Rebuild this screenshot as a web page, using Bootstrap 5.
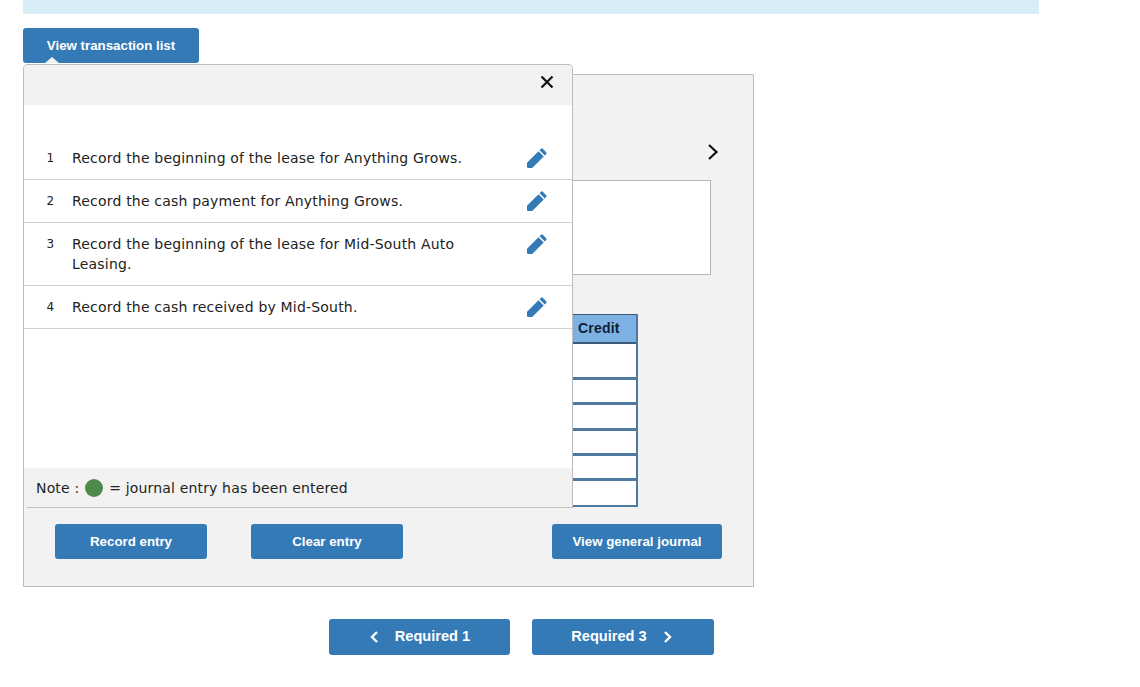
<!DOCTYPE html>
<html lang="en">
<head>
<meta charset="utf-8">
<title>Journal entry worksheet</title>
<link href="https://cdn.jsdelivr.net/npm/bootstrap@5.3.0/dist/css/bootstrap.min.css" rel="stylesheet">
<style>
body{background:#fff;font-family:"DejaVu Sans",Verdana,sans-serif;color:#222;padding:0 0 0 23px;margin:0}
.topstrip{width:1016px;height:14px;background:#d9edf7}
.act-btn{background:#337ab7;border:0;border-radius:3px;color:#fff;font:700 13.3px/1 "Liberation Sans",Arial,sans-serif;height:35px;padding:0;display:inline-flex;align-items:center;justify-content:center}
.act-btn:hover{background:#337ab7;color:#fff}
.list-toggle{width:176px;margin-top:14px;position:relative;display:flex}
.list-toggle::after{content:"";position:absolute;left:22px;bottom:0;border:7px solid transparent;border-top:0;border-bottom:6px solid #f1f1f1}
.sheet{position:relative;width:731px;height:513px;margin-top:11px;background:#f2f2f2;border:1px solid #bdbdbd;padding:0}
.next-row{height:105px;padding:67px 33px 0 0;align-items:flex-start}
.desc-box{width:660px;height:95px;margin-left:27px;background:#fff;border:1px solid #b5b5b5}
.journal{width:587px;margin:39px 0 0 27px;border-collapse:separate;border-spacing:0;background:#fff;border-right:2px solid #4f7a9f;border-bottom:2px solid #4f7a9f}
.journal th{height:30px;background:#7db1e4;color:#0f1f33;font:700 14px/1 "Liberation Sans",Arial,sans-serif;letter-spacing:.2px;border:1px solid #3c5a78;border-width:1px 0 2px;padding:0 0 1px 7px}
.journal td{padding:0;border-bottom:3px solid #4f7a9f}
.journal tr:last-child td{border-bottom:0}
.line-tall td{height:36px}.line-25 td{height:25px}.line-26 td{height:26px}.line-end td{height:24px}
.btn-row{position:absolute;left:31px;top:449px;width:667px;display:flex}
.w152{width:152px}.w170{width:170px}.gap-a{margin-left:44px}.gap-b{margin-left:auto}
.tx-pop{position:absolute;left:-1px;top:-11px;width:550px;height:444px;background:#fff;border:1px solid #bdbdbd;border-bottom:0;border-radius:5px 5px 0 0;display:flex;flex-direction:column;z-index:2}
.tx-head{height:40px;background:#f2f2f2;border-radius:4px 4px 0 0;display:flex;justify-content:flex-end;padding:9px 17px 0 0;flex:none}
.tx-list{margin:33px 0 0;padding:0;list-style:none;flex:1 1 auto}
.tx-item{display:flex;border-bottom:1px solid #d0d0d0;font-size:14px;line-height:20px;letter-spacing:.19px;padding:11px 0}
.tx-item:first-child{padding-top:10px}
.tx-num{width:48px;flex:none;font-size:12px;padding-left:22.5px;letter-spacing:0}
.tx-text{width:430px;flex:none}
.tx-edit{margin:-1px 0 -1px 23.5px;flex:none;display:block}
.tx-note{height:40px;background:#f2f2f2;display:flex;align-items:center;flex:none;font-size:14px;letter-spacing:.16px;padding-left:12px;position:relative}
.tx-note::after{content:"";position:absolute;left:3px;right:0;bottom:0;border-bottom:1px solid #c4c4c4}
.dot{width:18px;height:18px;border-radius:50%;background:#4f8a4a;margin:0 6px}
.pager{width:731px;margin-top:32px;display:flex;padding-left:306px;gap:22px}
.pager .act-btn{height:36px;font-size:14.6px;padding-bottom:1px}
.w181{width:181px}.pager .w182{width:182px;padding-right:2px}
.chev-l{margin-right:16px}.chev-r{margin-left:16px}
</style>
</head>
<body>
<div class="topstrip"></div>
<button class="btn act-btn list-toggle">View transaction list</button>
<main class="sheet">
  <div class="d-flex justify-content-end next-row">
    <svg width="14" height="20" viewBox="0 0 14 20" aria-hidden="true"><path d="M3 3l7.500 7L3 17" fill="none" stroke="#111" stroke-width="2.200"/></svg>
  </div>
  <div class="desc-box"></div>
  <table class="journal">
    <thead><tr><th></th><th style="width:65px">Credit</th></tr></thead>
    <tbody>
      <tr class="line-tall"><td></td><td></td></tr>
      <tr class="line-25"><td></td><td></td></tr>
      <tr class="line-26"><td></td><td></td></tr>
      <tr class="line-25"><td></td><td></td></tr>
      <tr class="line-25"><td></td><td></td></tr>
      <tr class="line-end"><td></td><td></td></tr>
    </tbody>
  </table>
  <div class="btn-row">
    <button class="btn act-btn w152">Record entry</button>
    <button class="btn act-btn w152 gap-a">Clear entry</button>
    <button class="btn act-btn w170 gap-b">View general journal</button>
  </div>
  <section class="tx-pop">
    <div class="tx-head">
      <svg width="16" height="16" viewBox="0 0 16 16" aria-hidden="true"><path d="M2.500 2.500l11 11M13.500 2.500l-11 11" stroke="#111" stroke-width="2.200" fill="none"/></svg>
    </div>
    <ul class="tx-list">
      <li class="tx-item"><span class="tx-num">1</span><span class="tx-text">Record the beginning of the lease for Anything Grows.</span><svg class="tx-edit" width="22" height="22" viewBox="0 0 22 22" aria-hidden="true"><path d="M1 15.800 12.500 4.300l5.200 5.200L6.200 21H2a1 1 0 0 1-1-1zM13.600 3.200 15 1.800a1.300 1.300 0 0 1 1.800 0l3.400 3.400a1.300 1.300 0 0 1 0 1.800l-1.400 1.400z" fill="#337ab7"/></svg></li>
      <li class="tx-item"><span class="tx-num">2</span><span class="tx-text">Record the cash payment for Anything Grows.</span><svg class="tx-edit" width="22" height="22" viewBox="0 0 22 22" aria-hidden="true"><path d="M1 15.800 12.500 4.300l5.200 5.200L6.200 21H2a1 1 0 0 1-1-1zM13.600 3.200 15 1.800a1.300 1.300 0 0 1 1.800 0l3.400 3.400a1.300 1.300 0 0 1 0 1.800l-1.400 1.400z" fill="#337ab7"/></svg></li>
      <li class="tx-item"><span class="tx-num">3</span><span class="tx-text">Record the beginning of the lease for Mid-South Auto Leasing.</span><svg class="tx-edit" width="22" height="22" viewBox="0 0 22 22" aria-hidden="true"><path d="M1 15.800 12.500 4.300l5.200 5.200L6.200 21H2a1 1 0 0 1-1-1zM13.600 3.200 15 1.800a1.300 1.300 0 0 1 1.800 0l3.400 3.400a1.300 1.300 0 0 1 0 1.800l-1.400 1.400z" fill="#337ab7"/></svg></li>
      <li class="tx-item"><span class="tx-num">4</span><span class="tx-text">Record the cash received by Mid-South.</span><svg class="tx-edit" width="22" height="22" viewBox="0 0 22 22" aria-hidden="true"><path d="M1 15.800 12.500 4.300l5.200 5.200L6.200 21H2a1 1 0 0 1-1-1zM13.600 3.200 15 1.800a1.300 1.300 0 0 1 1.800 0l3.400 3.400a1.300 1.300 0 0 1 0 1.800l-1.400 1.400z" fill="#337ab7"/></svg></li>
    </ul>
    <div class="tx-note">Note :<span class="dot"></span>= journal entry has been entered</div>
  </section>
</main>
<nav class="pager">
  <button class="btn act-btn w181"><svg class="chev-l" width="10" height="14" viewBox="0 0 10 14" aria-hidden="true"><path d="M8 2 3 7l5 5" fill="none" stroke="#fff" stroke-width="2.400"/></svg>Required 1</button>
  <button class="btn act-btn w182">Required 3<svg class="chev-r" width="10" height="14" viewBox="0 0 10 14" aria-hidden="true"><path d="M2 2l5 5-5 5" fill="none" stroke="#fff" stroke-width="2.400"/></svg></button>
</nav>
<script src="https://cdn.jsdelivr.net/npm/bootstrap@5.3.0/dist/js/bootstrap.bundle.min.js"></script>
</body>
</html>
